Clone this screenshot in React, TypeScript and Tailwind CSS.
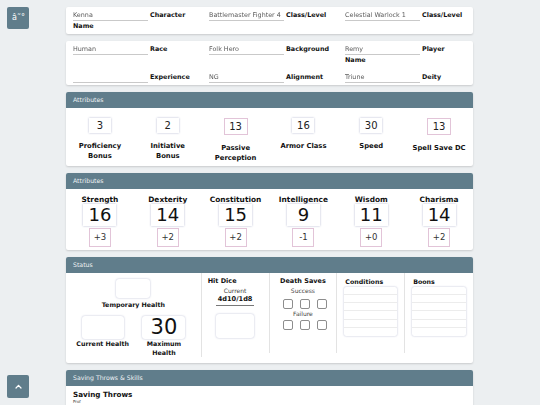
import React from 'react';

const headerCls =
  'h-[16px] bg-[#607d8b] rounded-t-[2px] flex items-center pl-[7px] text-[6.2px] text-[#eef2f4]';
const cardCls = 'bg-white rounded-[2px] shadow-[0_1px_2px_rgba(0,0,0,0.15)]';

interface FieldProps {
  value: string;
  label: string;
  second?: string;
}

const Field: React.FC<FieldProps> = ({ value, label, second }) => (
  <div className="text-[6.4px] leading-[10px]">
    <span className="inline-block w-[75px] border-b border-[#c9c9c9] text-[#5a5a5a] mr-[2px] [will-change:transform]">
      {value || '\u00a0'}
    </span>
    <span className="font-bold text-[#111]">{label}</span>
    {second && (
      <>
        <br />
        <span className="font-bold text-[#111]">{second}</span>
      </>
    )}
  </div>
);

const NumBox: React.FC<{ v: string; pink?: boolean }> = ({ v, pink }) =>
  pink ? (
    <div className="w-[24px] h-[17px] border border-[#e2c4d8] bg-white flex items-center justify-center text-[10px] text-[#222]">
      {v}
    </div>
  ) : (
    <div className="w-[22px] h-[15px] bg-white shadow-[0_0_2px_rgba(70,80,140,0.4)] flex items-center justify-center text-[10px] text-[#222]">
      {v}
    </div>
  );

const topAttrs = [
  { v: '3', l1: 'Proficiency', l2: 'Bonus' },
  { v: '2', l1: 'Initiative', l2: 'Bonus' },
  { v: '13', l1: 'Passive', l2: 'Perception', pink: true },
  { v: '16', l1: 'Armor Class' },
  { v: '30', l1: 'Speed' },
  { v: '13', l1: 'Spell Save DC', pink: true },
];

const stats = [
  { name: 'Strength', score: '16', mod: '+3' },
  { name: 'Dexterity', score: '14', mod: '+2' },
  { name: 'Constitution', score: '15', mod: '+2' },
  { name: 'Intelligence', score: '9', mod: '-1' },
  { name: 'Wisdom', score: '11', mod: '+0' },
  { name: 'Charisma', score: '14', mod: '+2' },
];

const healthBox = 'bg-white rounded-[3px] shadow-[0_0_2px_rgba(70,80,140,0.4)]';
const checkBox = 'w-[10px] h-[10px] rounded-[2px] border border-[#8d8d8d] bg-white';

const LinedBox: React.FC = () => (
  <div className="mt-[0.5px] h-[49px] bg-white rounded-[2px] shadow-[0_0_2px_rgba(70,80,140,0.4)] flex flex-col">
    {[0, 1, 2, 3, 4].map((i) => (
      <div key={i} className="flex-1 border-b border-[#ececec]" />
    ))}
    <div className="flex-1" />
  </div>
);

export default function App() {
  return (
    <div className="min-h-screen bg-[#eceff1] font-['DejaVu_Sans',sans-serif] flex">
      <div className="w-[66px] shrink-0 pt-[7px] pl-[7px]">
        <div className="w-[22px] h-[22px] bg-[#607d8b] rounded-[2px] overflow-hidden whitespace-nowrap flex items-center pl-[5px] text-[8px] text-white">
          â˜°
        </div>
      </div>

      <div className="w-[407px] shrink-0 pt-[7px] pb-[7px] flex flex-col gap-[7px]">
        {/* name card */}
        <div className={`${cardCls} pt-[3px] pb-[3px] pl-[7px] grid grid-cols-[130px_130px_120px] gap-x-[6px]`}>
          <Field value="Kenna" label="Character" second="Name" />
          <Field value="Battlemaster Fighter 4" label="Class/Level" />
          <Field value="Celestial Warlock 1" label="Class/Level" />
        </div>

        {/* details card */}
        <div className={`${cardCls} pt-[3px] pb-[2px] pl-[7px] grid grid-cols-[130px_130px_120px] gap-x-[6px] gap-y-[7px]`}>
          <Field value="Human" label="Race" />
          <Field value="Folk Hero" label="Background" />
          <Field value="Remy" label="Player" second="Name" />
          <Field value="" label="Experience" />
          <Field value="NG" label="Alignment" />
          <Field value="Triune" label="Deity" />
        </div>

        {/* attributes */}
        <div className={cardCls}>
          <div className={headerCls}>Attributes</div>
          <div className="grid grid-cols-6 pt-[10px] pb-[3px]">
            {topAttrs.map((a, i) => (
              <div key={i} className="flex flex-col items-center">
                <NumBox v={a.v} pink={a.pink} />
                <div className="mt-[9px] text-center font-bold text-[6.8px] leading-[9.5px] text-[#111]">
                  {a.l1}
                  {a.l2 && (
                    <>
                      <br />
                      {a.l2}
                    </>
                  )}
                </div>
              </div>
            ))}
          </div>
        </div>

        {/* ability scores */}
        <div className={cardCls}>
          <div className={headerCls}>Attributes</div>
          <div className="grid grid-cols-6 pt-[5.5px] pb-[3px]">
            {stats.map((s) => (
              <div key={s.name} className="flex flex-col items-center">
                <div className="font-bold text-[7.4px] leading-[9px] text-[#111]">{s.name}</div>
                <div className="mt-[0.5px] w-[33px] h-[22px] bg-white shadow-[0_0_2px_rgba(70,80,140,0.4)] flex items-center justify-center text-[18px] leading-none text-[#111]">
                  {s.score}
                </div>
                <div className="mt-[2px] w-[22px] h-[19px] border border-[#e2c4d8] bg-white flex items-center justify-center text-[8.5px] text-[#333]">
                  {s.mod}
                </div>
              </div>
            ))}
          </div>
        </div>

        {/* status */}
        <div className={`${cardCls} pb-[6px]`}>
          <div className={headerCls}>Status</div>
          <div className="grid grid-cols-6 items-start">
            <div className="col-span-2 h-[84px] border-r border-[#e3e3e3] pt-[6px] px-[6px] flex flex-col items-center">
              <div className={`${healthBox} w-[34px] h-[19px]`} />
              <div className="mt-[1.5px] font-bold text-[6.3px] leading-[9px] text-[#111]">Temporary Health</div>
              <div className="mt-[7px] w-full grid grid-cols-2">
                <div className="flex flex-col items-center">
                  <div className={`${healthBox} w-[42px] h-[23px]`} />
                  <div className="mt-[0.5px] font-bold text-[6.3px] leading-[9px] text-[#111]">Current Health</div>
                </div>
                <div className="flex flex-col items-center">
                  <div className={`${healthBox} w-[43px] h-[23px] flex items-center justify-center text-[21px] leading-none text-[#111]`}>
                    30
                  </div>
                  <div className="mt-[0.5px] font-bold text-[6.3px] leading-[9px] text-[#111] text-center">
                    Maximum
                    <br />
                    Health
                  </div>
                </div>
              </div>
            </div>

            <div className="h-[80px] border-r border-[#e3e3e3] pt-[4px] flex flex-col">
              <div className="pl-[6px] font-bold text-[6.5px] leading-[9px] text-[#111]">Hit Dice</div>
              <div className="text-center text-[6px] leading-[9px] text-[#444]">Current</div>
              <div className="flex justify-center">
                <span className="inline-block border-b border-[#777] px-[2px] font-bold text-[6.6px] leading-[9.5px] text-[#111]">
                  4d10/1d8
                </span>
              </div>
              <div className="flex justify-center mt-[8px]">
                <div className={`${healthBox} w-[38px] h-[24px]`} />
              </div>
            </div>

            <div className="h-[80px] border-r border-[#e3e3e3] pt-[4px] flex flex-col items-center">
              <div className="font-bold text-[6.5px] leading-[9px] text-[#111]">Death Saves</div>
              <div className="text-[6px] leading-[9px] text-[#444]">Success</div>
              <div className="mt-[3.5px] flex gap-[7px] pl-[4px]">
                <div className={checkBox} />
                <div className={checkBox} />
                <div className={checkBox} />
              </div>
              <div className="text-[6px] leading-[9px] text-[#444]">Failure</div>
              <div className="mt-[2.5px] flex gap-[7px] pl-[4px]">
                <div className={checkBox} />
                <div className={checkBox} />
                <div className={checkBox} />
              </div>
            </div>

            <div className="h-[80px] border-r border-[#e3e3e3] pt-[4px] px-[7px]">
              <div className="pl-[1px] font-bold text-[6.3px] leading-[9px] text-[#111]">Conditions</div>
              <LinedBox />
            </div>

            <div className="h-[80px] pt-[4px] px-[7px]">
              <div className="pl-[1px] font-bold text-[6.3px] leading-[9px] text-[#111]">Boons</div>
              <LinedBox />
            </div>
          </div>
        </div>

        {/* saving throws */}
        <div className={cardCls}>
          <div className={headerCls}>Saving Throws &amp; Skills</div>
          <div className="pt-[4px] pl-[7px] pb-[20px]">
            <div className="font-bold text-[7.2px] leading-[9px] text-[#111]">Saving Throws</div>
            <div className="text-[4px] leading-[6px] text-[#333]">Prof</div>
          </div>
        </div>
      </div>

      <div className="fixed left-[7px] bottom-[7px] w-[22px] h-[23px] bg-[#607d8b] rounded-[2px] flex items-center justify-center">
        <svg width="7" height="5" viewBox="0 0 7 5" fill="none">
          <polyline points="1,4 3.5,1.3 6,4" stroke="white" strokeWidth="1.2" strokeLinecap="round" strokeLinejoin="round" />
        </svg>
      </div>
    </div>
  );
}
